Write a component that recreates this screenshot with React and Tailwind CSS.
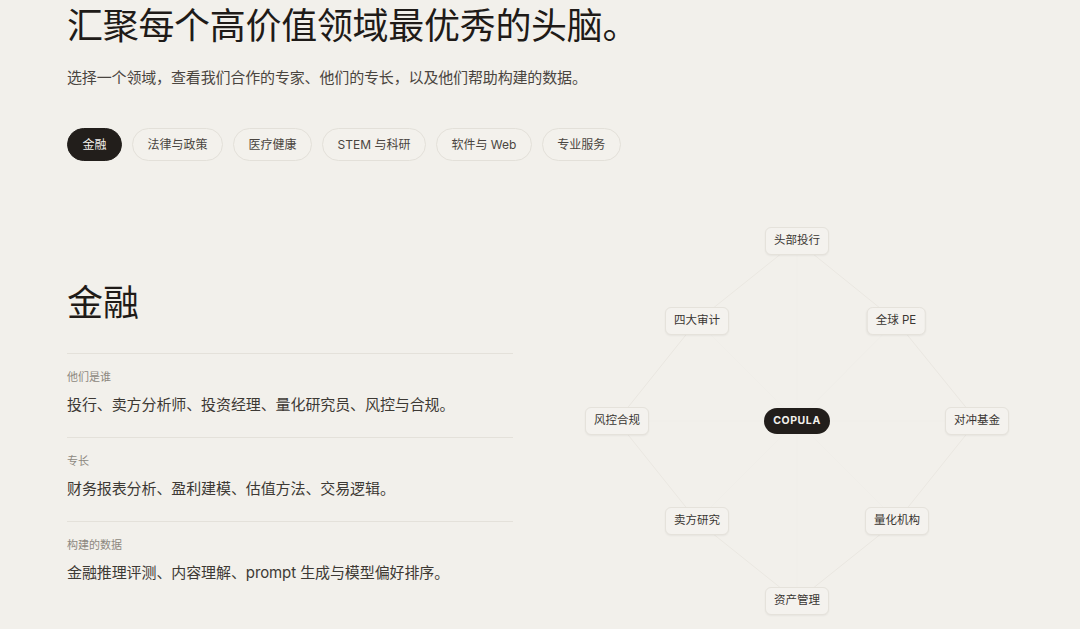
import React from "react";

const tabs = ["金融", "法律与政策", "医疗健康", "STEM 与科研", "软件与 Web", "专业服务"];

const nodes = [
  { label: "头部投行", x: 220, y: 20 },
  { label: "全球 PE", x: 319, y: 100 },
  { label: "对冲基金", x: 400, y: 200 },
  { label: "量化机构", x: 320, y: 300 },
  { label: "资产管理", x: 220, y: 380 },
  { label: "卖方研究", x: 120, y: 300 },
  { label: "风控合规", x: 40, y: 200 },
  { label: "四大审计", x: 120, y: 100 },
];

const rows = [
  { label: "他们是谁", text: "投行、卖方分析师、投资经理、量化研究员、风控与合规。" },
  { label: "专长", text: "财务报表分析、盈利建模、估值方法、交易逻辑。" },
  { label: "构建的数据", text: "金融推理评测、内容理解、prompt 生成与模型偏好排序。" },
];

const font = { fontFamily: '"Inter", "Noto Sans CJK SC", sans-serif' };

export default function App() {
  const pts = nodes.map((n) => `${n.x},${n.y}`).join(" ");
  return (
    <div className="w-[1080px] h-[629px] overflow-hidden bg-[#f2f0eb] text-[#2b2723]" style={font}>
      <div className="pl-[67px]">
        <h1 className="text-[36px] leading-[52px] font-normal text-[#1f1b18] tracking-[-0.3px]">
          汇聚每个高价值领域最优秀的头脑。
        </h1>
        <p className="mt-[14px] text-[15px] leading-[24px] tracking-[-0.15px] text-[#4a4540]">
          选择一个领域，查看我们合作的专家、他们的专长，以及他们帮助构建的数据。
        </p>
        <div className="mt-[38px] flex gap-[10px]">
          {tabs.map((t, i) => (
            <button
              key={t}
              className={
                i === 0
                  ? "h-[33px] px-[14.5px] rounded-full bg-[#221e1b] text-[#f4f2ee] text-[12px] border border-[#221e1b]"
                  : "h-[33px] px-[14.5px] rounded-full border border-[#e3e0d9] bg-[#f3f1ec] text-[#4a4540] text-[12px]"
              }
            >
              {t}
            </button>
          ))}
        </div>
        <div className="mt-[60px] flex">
          <div className="w-[446px] pt-[58px]">
            <h2 className="text-[36px] leading-[48px] font-normal text-[#1f1b18]">金融</h2>
            <div className="mt-[26px]">
              {rows.map((r) => (
                <div key={r.label} className="border-t border-[#e4e1da] pt-[14px] pb-[20px]">
                  <div className="text-[11px] leading-[18px] text-[#8d8880]">{r.label}</div>
                  <div className="mt-[7px] text-[15px] leading-[24px] tracking-[-0.1px] text-[#3d3934]">
                    {r.text}
                  </div>
                </div>
              ))}
            </div>
          </div>
          <div className="ml-[64px] relative w-[440px] h-[400px]">
            <svg className="absolute inset-0" width="440" height="400" viewBox="0 0 440 400">
              {nodes.map((n) => (
                <line key={n.label} x1="220" y1="200" x2={n.x} y2={n.y} stroke="#f0eee9" strokeWidth="1" />
              ))}
              <polygon points={pts} fill="none" stroke="#eae7e1" strokeWidth="1" />
            </svg>
            {nodes.map((n) => (
              <div
                key={n.label}
                className="absolute -translate-x-1/2 -translate-y-1/2 h-[28px] px-[8px] flex items-center rounded-[6px] border border-[#e5e2db] bg-[#f4f2ee] shadow-[0_1px_2px_rgba(0,0,0,0.05)] text-[11.5px] text-[#3a3632] whitespace-nowrap"
                style={{ left: n.x, top: n.y }}
              >
                {n.label}
              </div>
            ))}
            <div
              className="absolute -translate-x-1/2 -translate-y-1/2 h-[26px] w-[66px] flex items-center justify-center rounded-full bg-[#221e1b] text-[10.5px] font-bold tracking-[0.6px] text-[#f2f0eb]"
              style={{ left: 220, top: 200 }}
            >
              COPULA
            </div>
          </div>
        </div>
      </div>
    </div>
  );
}
